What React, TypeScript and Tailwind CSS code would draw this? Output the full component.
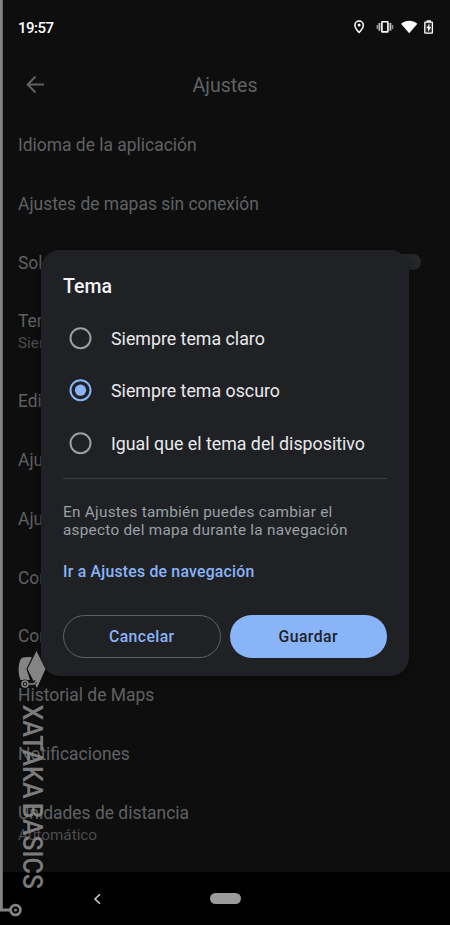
const settings = [
  { title: "Idioma de la aplicación" },
  { title: "Ajustes de mapas sin conexión" },
  { title: "Solo Wi-Fi", toggle: true },
  { title: "Tema", detail: "Siempre tema oscuro" },
  { title: "Editar casa o trabajo" },
  { title: "Ajustes de ubicación" },
  { title: "Ajustes de navegación" },
  { title: "Contenido personal" },
  { title: "Configuración de accesibilidad" },
  { title: "Historial de Maps" },
  { title: "Notificaciones" },
  { title: "Unidades de distancia", detail: "Automático" },
]

const options = [
  { label: "Siempre tema claro" },
  { label: "Siempre tema oscuro", checked: true },
  { label: "Igual que el tema del dispositivo" },
]

function StatusBar() {
  return (
    <div className="flex h-[54px] shrink-0 items-center justify-between pl-[18px] pr-[16px]">
      <span className="mt-[2px] text-[15px] font-medium tracking-[-0.5px] text-white">19:57</span>
      <svg width="80" height="16" viewBox="0 0 80 16" fill="none">
        {/* location */}
        <path d="M.9 6.2a4.2 4.2 0 0 1 8.4 0c0 2.9-4.2 7.3-4.2 7.3S.9 9.1.9 6.2Z" stroke="white" strokeWidth="1.5" />
        <circle cx="5.1" cy="6" r="1.5" fill="white" />
        {/* vibrate */}
        <rect x="27.9" y="2.7" width="6" height="10.2" rx="0.5" stroke="white" strokeWidth="1.6" />
        <path d="M25.4 4v7.8M36.4 4v7.8" stroke="#bdbdbd" strokeWidth="1.9" />
        <path d="M23.3 5.9v4M38.5 5.9v4" stroke="#8f8f8f" strokeWidth="1.5" />
        {/* wifi */}
        <path d="M47 4.7C52 .7 58.5 .7 63.4 4.7L55.2 14.3Z" fill="white" />
        {/* battery */}
        <path d="M72.6 1.3H77v1.6h-4.4Z" fill="white" />
        <rect x="70.8" y="3.2" width="7.6" height="11" rx="0.5" fill="#2a2a2a" stroke="white" strokeWidth="1.3" />
        <path d="m75.4 4.4-3 4.8h1.700v3.800l3-5h-1.700Z" fill="white" />
      </svg>
    </div>
  )
}

function ThemeDialog() {
  return (
    <div className="absolute left-[41px] top-[250px] flex h-[426px] w-[368px] flex-col rounded-[19px] bg-[#202124] px-[22px] shadow-[0_2px_8px_rgba(0,0,0,0.45)]">
      <h2 className="mt-[25px] h-6 text-[19.5px] font-medium leading-6 text-[#f1f3f4]">Tema</h2>
      <div className="mt-[13px] flex flex-col">
        {options.map((option) => (
          <label key={option.label} className="flex h-[52.5px] items-center pl-[6px]">
            <svg width="23" height="23" viewBox="0 0 23 23" fill="none">
              <circle cx="11.5" cy="11.2" r="10" stroke={option.checked ? "#8ab4f8" : "#9aa0a6"} strokeWidth="2" />
              {option.checked && <circle cx="11.5" cy="11.2" r="5.6" fill="#8ab4f8" />}
            </svg>
            <span className="ml-[19px] mt-[2px] whitespace-nowrap text-[17.8px] text-[#e8eaed]">{option.label}</span>
          </label>
        ))}
      </div>
      <div className="mt-2 h-[1.5px] bg-[#3c4043]" />
      <p className="mt-6 whitespace-nowrap text-[15.3px] leading-[18.3px] tracking-[0.27px] text-[#9aa0a6]">
        En Ajustes también puedes cambiar el
        <br />
        aspecto del mapa durante la navegación
      </p>
      <a className="mt-[22px] h-5 whitespace-nowrap text-[15.8px] font-medium leading-5 tracking-[0.22px] text-[#8ab4f8]">
        Ir a Ajustes de navegación
      </a>
      <div className="mt-[33px] grid grid-cols-2 gap-[9px] text-[15.8px] font-medium tracking-[0.4px]">
        <button className="h-[43.5px] rounded-full border border-[#5f6368] text-[#8ab4f8]">Cancelar</button>
        <button className="h-[43.5px] rounded-full bg-[#8ab4f8] text-[#202124]">Guardar</button>
      </div>
    </div>
  )
}

function Watermark() {
  return (
    <svg className="absolute left-0 top-0" width="50" height="925" viewBox="0 0 50 925" fill="none">
      <path d="M1.3 0V910H10" stroke="#848484" strokeWidth="3" />
      <circle cx="15.5" cy="910" r="4.9" stroke="#848484" strokeWidth="2.8" />
      <circle cx="15.5" cy="910" r="1.5" fill="#848484" />
      {/* graduation cap */}
      <path d="M32 657.5C27 656.5 22 657 20.5 659.5C18 665 18 674 20.5 680H30L26.5 669Z" fill="#848484" />
      <path d="M36.5 650 46 669 37 689 27 669Z" fill="#848484" stroke="#0e0e0e" strokeWidth="1" />
      <path d="M28 684H33.5L36 681" stroke="#151515" strokeWidth="3.4" />
      <circle cx="25" cy="684" r="4.5" fill="#151515" />
      <circle cx="25" cy="684" r="3" stroke="#848484" strokeWidth="1.5" />
      <circle cx="25" cy="684" r="1.2" fill="#848484" />
      <path d="M28.5 684H34L37 680.5" stroke="#848484" strokeWidth="1.6" />
      <text
        transform="translate(22.8 704.5) rotate(90)"
        textLength="184.5"
        lengthAdjust="spacingAndGlyphs"
        fill="#8b8b8b"
        fillOpacity="0.9"
        fontSize="26.8"
        className="font-['Roboto',sans-serif] font-medium [word-spacing:-2px]"
      >
        XATAKA BASICS
      </text>
    </svg>
  )
}

export default function App() {
  return (
    <div className="relative flex h-[925px] w-[450px] flex-col overflow-hidden bg-[#0e0e0e] font-['Roboto',sans-serif]">
      <StatusBar />

      <header className="grid h-[61px] shrink-0 grid-cols-[1fr_auto_1fr] items-center px-[26px] text-[#606163]">
        <svg width="19" height="18" viewBox="0 0 19 18" fill="none" stroke="currentColor" strokeWidth="2">
          <path d="M18 8.5H2M9.5 .5 1.7 8.5l7.8 8" />
        </svg>
        <h1 className="mt-[2px] text-[19.5px]">Ajustes</h1>
      </header>

      <main className="flex min-h-0 flex-1 flex-col overflow-hidden text-[#606163]">
        {settings.map((item) => (
          <div
            key={item.title}
            className={`flex shrink-0 justify-between pl-[18px] pr-[29px] pt-[19px] ${item.detail ? "h-[80px]" : "h-[58.75px]"}`}
          >
            <div className="whitespace-nowrap">
              <div className="text-[17.45px] leading-[22px]">{item.title}</div>
              {item.detail && <div className="text-[15.3px] leading-[22px] text-[#4c4d4f]">{item.detail}</div>}
            </div>
            {item.toggle && <div className="mt-[2px] h-4 w-[37px] rounded-full bg-[#252627]" />}
          </div>
        ))}
      </main>

      <nav className="grid h-[53px] shrink-0 grid-cols-[1fr_auto_1fr] items-center bg-black">
        <svg className="ml-[93px]" width="9" height="12" viewBox="0 0 9 12" fill="none" stroke="#d0d0d0" strokeWidth="1.5">
          <path d="M7 1.3 2 6l5 4.7" />
        </svg>
        <div className="h-[11px] w-[31px] rounded-full bg-[#9b9b9b]" />
      </nav>

      <ThemeDialog />
      <Watermark />
    </div>
  )
}
